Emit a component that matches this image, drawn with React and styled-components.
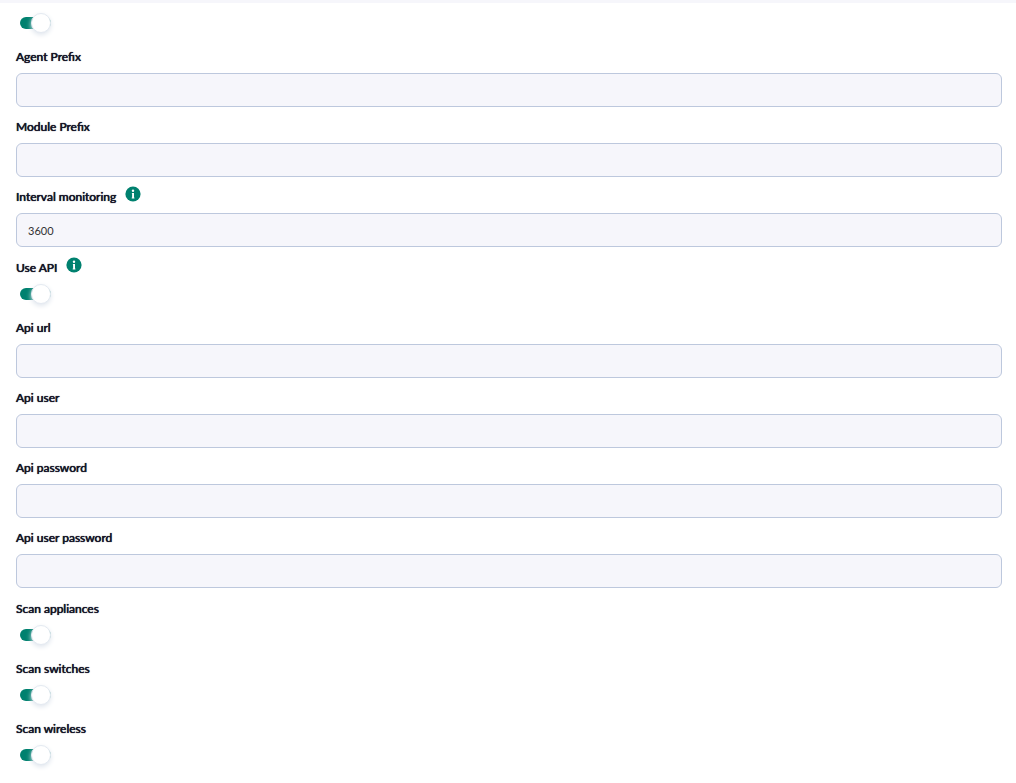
import React, { useState } from "react";
import styled, { createGlobalStyle } from "styled-components";

const GlobalStyle = createGlobalStyle`
  *,
  *::after {
    box-sizing: border-box;
  }
  body {
    margin: 0;
    background-color: #ffffff;
    font-family: Lato, "Open Sans", sans-serif;
  }
`;

const InfoIcon = () => (
  <Icon viewBox="0 0 16 16" role="img" aria-label="Info">
    <circle cx="8" cy="8" r="7.6" fill="#00816f" />
    <circle cx="8" cy="4.8" r="1.2" fill="#ffffff" />
    <path
      d="M6.9 7H9v4.6h.4v.9H6.7v-.9h.4V7.9h-.2z"
      fill="#ffffff"
    />
  </Icon>
);

const TextField = ({ id, label, info, type = "text", initial = "" }) => {
  const [value, setValue] = useState(initial);

  return (
    <Field>
      <LabelRow>
        <Label htmlFor={id}>{label}</Label>
        {info && <InfoIcon />}
      </LabelRow>
      <Input
        id={id}
        name={id}
        type={type}
        value={value}
        onChange={(e) => setValue(e.target.value)}
      />
    </Field>
  );
};

const SwitchField = ({ id, label, info }) => {
  const [checked, setChecked] = useState(true);

  return (
    <Field $switch>
      {label && (
        <LabelRow>
          <Label htmlFor={id}>{label}</Label>
          {info && <InfoIcon />}
        </LabelRow>
      )}
      <Switch
        id={id}
        name={id}
        type="checkbox"
        aria-label={label ? undefined : "Enabled"}
        checked={checked}
        onChange={(e) => setChecked(e.target.checked)}
      />
    </Field>
  );
};

const App = () => {
  return (
    <>
      <GlobalStyle />
      <Form>
        <Section>
          <SwitchField id="enabled" />
        </Section>
        <Section>
          <TextField id="agentPrefix" label="Agent Prefix" />
          <TextField id="modulePrefix" label="Module Prefix" />
          <TextField
            id="interval"
            label="Interval monitoring"
            initial="3600"
            info
          />
          <SwitchField id="useApi" label="Use API" info />
        </Section>
        <Section>
          <TextField id="apiUrl" label="Api url" />
          <TextField id="apiUser" label="Api user" />
          <TextField id="apiPassword" label="Api password" type="password" />
          <TextField
            id="apiUserPassword"
            label="Api user password"
            type="password"
          />
          <SwitchField id="scanAppliances" label="Scan appliances" />
          <SwitchField id="scanSwitches" label="Scan switches" />
          <SwitchField id="scanWireless" label="Scan wireless" />
        </Section>
      </Form>
    </>
  );
};

const Form = styled.form`
  display: flex;
  flex-direction: column;
  gap: 1px;
  padding: 8px 14px 0 16px;
  border-top: 3px solid #f6f6fb;
`;
const Section = styled.div`
  display: flex;
  flex-direction: column;
`;
const Field = styled.div`
  display: flex;
  flex-direction: column;
  align-items: flex-start;
  gap: ${({ $switch }) => ($switch ? "7px" : "8px")};
  padding: ${({ $switch }) => ($switch ? "1px 0 14px" : "0 0 12px")};
`;
const LabelRow = styled.div`
  display: flex;
  align-items: flex-end;
  gap: 9px;
  height: 16px;
`;
const Label = styled.label`
  color: #161628;
  font-size: 12px;
  font-weight: 400;
  line-height: 16px;
  text-shadow: 0 0 0 #161628, 0 0 1px #161628;
`;
const Icon = styled.svg`
  width: 16px;
  height: 16px;
  margin-bottom: 3px;
`;
const Input = styled.input`
  width: 100%;
  height: 34px;
  padding: 0 11px;
  border: 1px solid #bdc8dd;
  border-radius: 6px;
  background-color: #f6f6fb;
  color: #333333;
  font-family: inherit;
  font-size: 11px;
  &:focus {
    outline: none;
    border-color: #00816f;
  }
`;
const Switch = styled.input`
  appearance: none;
  display: flex;
  align-items: center;
  justify-content: ${({ checked }) => (checked ? "flex-end" : "flex-start")};
  width: 31px;
  height: 12px;
  margin: 5px 4px;
  border-radius: 6px;
  background-color: ${({ checked }) => (checked ? "#00816f" : "#c0ccdc")};
  cursor: pointer;
  &::after {
    content: "";
    flex-shrink: 0;
    width: 20px;
    height: 20px;
    border: 1px solid #e4eaf1;
    border-radius: 50%;
    background-color: #ffffff;
    box-shadow: 0 2px 5px #dfe5ed;
  }
`;

export default App;
